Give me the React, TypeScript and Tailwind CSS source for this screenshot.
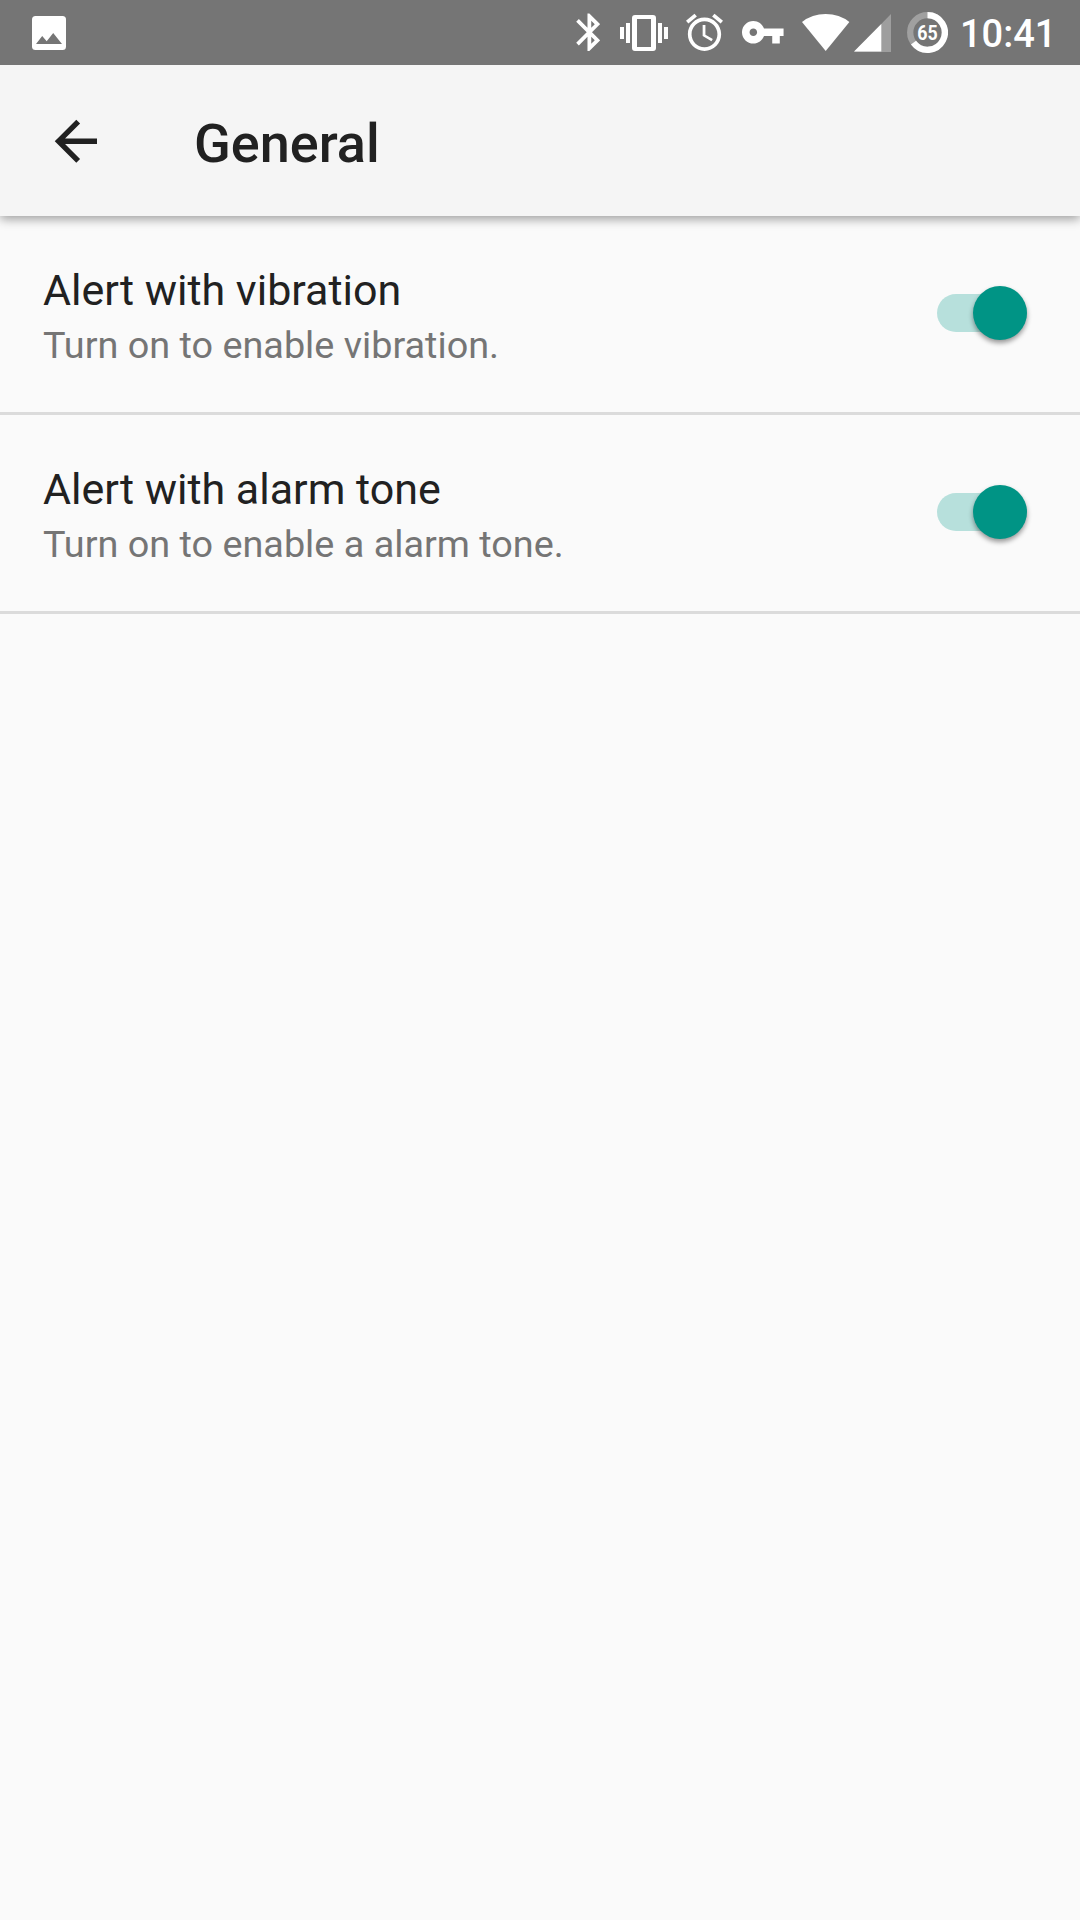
import React from "react";

function StatusBar() {
  return (
    <header className="relative z-10 flex h-[65px] items-start bg-[#757575] pl-8 text-white">
      <svg className="mt-4 h-[34px] w-[34px]" viewBox="0 0 34 34">
        <rect width="34" height="34" rx="3.5" fill="#fff" />
        <path d="M4 28L10.2 20L14.7 25.3L21.2 17L30 28Z" fill="#757575" />
      </svg>
      <svg className="mt-[13px] ml-[510px] h-[39px] w-6" viewBox="0 0 24 39" fill="#fff">
        <path transform="translate(-9.2 -3.3) scale(1.88)" d="M17.71 7.71L12 2h-1v7.59L6.41 5 5 6.41 10.59 12 5 17.59 6.41 19 11 14.41V22h1l5.71-5.71-4.3-4.29 4.3-4.29zM13 5.83l1.88 1.88L13 9.59V5.83zm1.88 10.46L13 18.17v-3.76l1.88 1.88z" />
      </svg>
      <svg className="mt-[15px] ml-5 h-9 w-12" viewBox="0 0 48 36" fill="#fff">
        <path d="M0 12h4v12H0zM6 8h4v20H6zM38 8h4v20h-4zM44 12h4v12h-4z" />
        <path fillRule="evenodd" d="M15 0h18a3 3 0 0 1 3 3v30a3 3 0 0 1-3 3H15a3 3 0 0 1-3-3V3a3 3 0 0 1 3-3zM17 4v28h14V4z" />
      </svg>
      <svg className="mt-[13px] ml-[18px] h-[39px] w-[38px]" viewBox="0 0 38 39" fill="#fff">
        <path transform="translate(-3.7 -2.8) scale(1.85)" d="M22 5.72l-4.6-3.86-1.29 1.53 4.6 3.86L22 5.72zM7.88 3.39L6.6 1.86 2 5.71l1.29 1.53 4.59-3.85zM12.5 8H11v6l4.75 2.85.75-1.23-4-2.37V8zM12 4c-4.97 0-9 4.03-9 9s4.02 9 9 9c4.97 0 9-4.03 9-9s-4.03-9-9-9zm0 16c-3.87 0-7-3.13-7-7s3.13-7 7-7 7 3.13 7 7-3.13 7-7 7z" />
      </svg>
      <svg className="mt-5 ml-[18px] h-[25px] w-[42px]" viewBox="0 0 42 25" fill="#fff">
        <path transform="translate(-1.9 -10.4) scale(1.89)" d="M12.65 10C11.83 7.67 9.61 6 7 6c-3.31 0-6 2.69-6 6s2.69 6 6 6c2.61 0 4.83-1.67 5.65-4H17v4h4v-4h2v-4H12.65zM7 14c-1.1 0-2-.9-2-2s.9-2 2-2 2 .9 2 2-.9 2-2 2z" />
      </svg>
      <svg className="mt-[14px] ml-[18px] h-[37px] w-[48px]" viewBox="0 0 48 37" fill="#fff">
        <path d="M0 8Q10 0 23.7 0T47.4 8L23.7 37Z" />
      </svg>
      <svg className="mt-[14px] ml-1 h-[38px] w-[37px]" viewBox="0 0 37 38" fill="#fff">
        <path d="M0 38L37 0V38Z" opacity=".3" />
        <path d="M0 37.5L27.3 10V37.5Z" />
      </svg>
      <div className="relative mt-3 ml-4 h-[41px] w-[41px]">
        <svg className="h-full w-full" viewBox="0 0 41 41" fill="none" stroke="#fff" strokeWidth="6.3">
          <circle cx="20.5" cy="20.5" r="17.3" stroke="#a0a0a0" />
          <path d="M20.5 3.2A17.3 17.3 0 1 1 6.5 30.67" />
        </svg>
        <span className="absolute inset-0 flex scale-x-[0.89] items-center justify-center pt-px font-[Roboto] text-[20px] leading-none font-bold">65</span>
      </div>
      <time className="mt-3 ml-[12px] font-[Roboto] text-[38px] leading-[45px] font-medium">10:41</time>
    </header>
  );
}

function AppBar() {
  return (
    <div className="relative flex h-[151px] items-center bg-[#f5f5f5] shadow-[0_3px_10px_rgba(0,0,0,0.38)]">
      <svg className="ml-[53px] h-[44px] w-[44px]" viewBox="0 0 44 44" fill="#212121">
        <path transform="translate(-9 -10) scale(2.69)" d="M20 11H7.83l5.59-5.59L12 4l-8 8 8 8 1.41-1.41L7.83 13H20v-2z" />
      </svg>
      <h1 className="mt-[6px] ml-[97px] font-[Roboto] text-[54px] leading-[64px] font-medium text-[#212121]">General</h1>
    </div>
  );
}

function SettingRow({ title, description }: { title: string; description: string }) {
  return (
    <div className="flex h-[199px] items-start justify-between border-b-3 border-[#dbdbdb] pr-[53.5px] pl-[43px] font-[Roboto]">
      <div className="pt-12">
        <h2 className="text-[43px] leading-[52px] text-[#212121]">{title}</h2>
        <p className="text-[37.8px] leading-[58px] text-[#757575]">{description}</p>
      </div>
      <button role="switch" aria-checked="true" aria-label={title} className="mt-[70.3px] flex h-[54px] w-[89.5px] items-center justify-end rounded-full">
        <span className="-mr-[54px] h-[38px] w-[89.5px] shrink-0 rounded-full bg-[#b7e0dc]" />
        <span className="relative h-[54px] w-[54px] shrink-0 rounded-full bg-[#009485] shadow-[0_3px_5px_rgba(0,0,0,0.4)]" />
      </button>
    </div>
  );
}

export default function App() {
  return (
    <div className="h-[1920px] w-[1080px] overflow-hidden bg-[#fafafa]">
      <StatusBar />
      <AppBar />
      <main>
        <SettingRow title="Alert with vibration" description="Turn on to enable vibration." />
        <SettingRow title="Alert with alarm tone" description="Turn on to enable a alarm tone." />
      </main>
    </div>
  );
}
